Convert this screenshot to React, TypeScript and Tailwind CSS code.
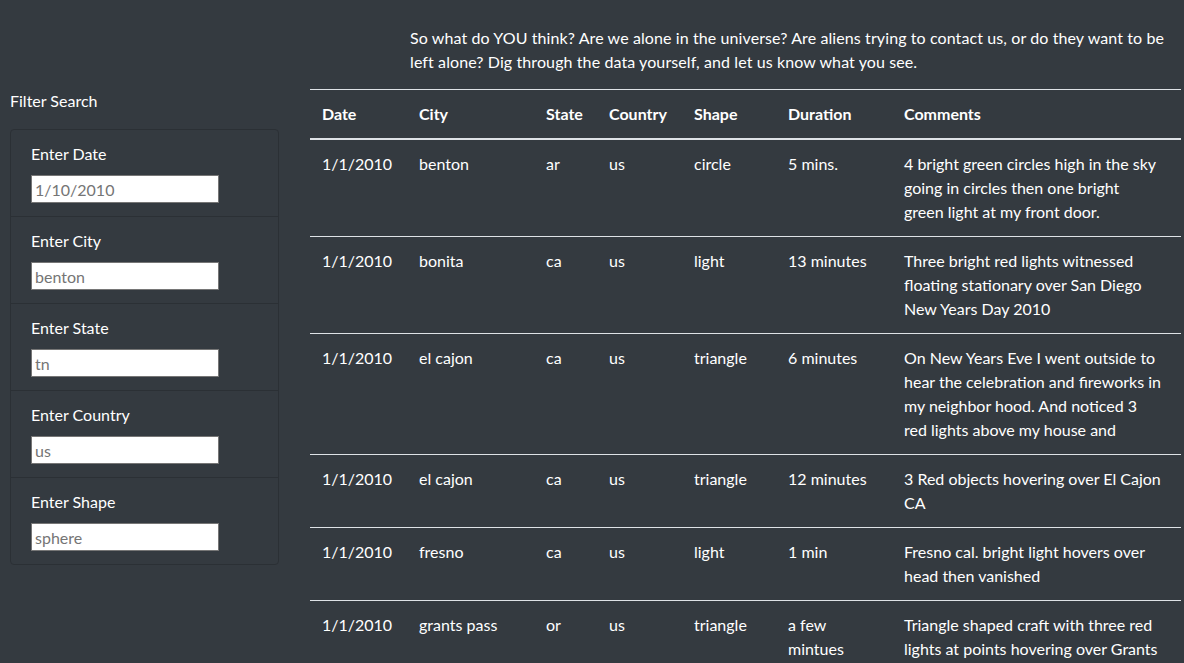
import React from "react";

const rows: [string, string, string, string, string, string, string[]][] = [
  ["1/1/2010", "benton", "ar", "us", "circle", "5 mins.", ["4 bright green circles high in the sky", "going in circles then one bright", "green light at my front door."]],
  ["1/1/2010", "bonita", "ca", "us", "light", "13 minutes", ["Three bright red lights witnessed", "floating stationary over San Diego", "New Years Day 2010"]],
  ["1/1/2010", "el cajon", "ca", "us", "triangle", "6 minutes", ["On New Years Eve I went outside to", "hear the celebration and fireworks in", "my neighbor hood. And noticed 3", "red lights above my house and"]],
  ["1/1/2010", "el cajon", "ca", "us", "triangle", "12 minutes", ["3 Red objects hovering over El Cajon", "CA"]],
  ["1/1/2010", "fresno", "ca", "us", "light", "1 min", ["Fresno cal. bright light hovers over", "head then vanished"]],
  ["1/1/2010", "grants pass", "or", "us", "triangle", "a few mintues", ["Triangle shaped craft with three red", "lights at points hovering over Grants", "Pass"]],
];

const filters = [
  ["Enter Date", "1/10/2010"],
  ["Enter City", "benton"],
  ["Enter State", "tn"],
  ["Enter Country", "us"],
  ["Enter Shape", "sphere"],
];

const headers = ["Date", "City", "State", "Country", "Shape", "Duration", "Comments"];
const widths = [97, 127, 63, 85, 94, 116, 289];

export default function App() {
  return (
    <div
      className="h-[663px] w-[1184px] overflow-hidden bg-[#343a40] text-white text-[16px] leading-6"
      style={{ fontFamily: 'Lato, "Open Sans", sans-serif' }}
    >
      <div className="pt-[26px] pl-[410px] mb-[15px]">
        <p className="w-[760px] tracking-[0.1px]">
          So what do YOU think? Are we alone in the universe? Are aliens trying to contact us, or do they want to be left alone? Dig through the data yourself, and let us know what you see.
        </p>
      </div>
      <div className="flex">
        <div className="ml-[10px] w-[269px] shrink-0">
          <div className="mb-4">Filter Search</div>
          <ul className="border border-[#2b3035] rounded-[4px]">
            {filters.map(([label, ph], i) => (
              <li
                key={label}
                className={`px-5 pt-3 pb-[13px] ${i < filters.length - 1 ? "border-b border-[#2b3035]" : ""}`}
              >
                <label className="block mb-[9px]">{label}</label>
                <input
                  placeholder={ph}
                  className="block w-[188px] h-[28px] bg-white border border-[#767676] px-[3px] text-[16px] text-black placeholder:text-[#757575] outline-none"
                />
              </li>
            ))}
          </ul>
        </div>
        <div className="ml-[31px] w-[871px] shrink-0">
          <table className="table-fixed w-[871px] border-collapse">
            <colgroup>
              {widths.map((w, i) => (
                <col key={i} style={{ width: w }} />
              ))}
            </colgroup>
            <thead>
              <tr>
                {headers.map((h) => (
                  <th
                    key={h}
                    className="text-left font-bold p-3 border-t border-t-[#dee2e6] border-b-2 border-b-[#dee2e6] align-bottom"
                  >
                    {h}
                  </th>
                ))}
              </tr>
            </thead>
            <tbody>
              {rows.map((r, i) => (
                <tr key={i}>
                  {r.slice(0, 6).map((c, j) => (
                    <td key={j} className={`p-3 align-top ${i > 0 ? "border-t border-[#dee2e6]" : ""}`}>
                      {c as string}
                    </td>
                  ))}
                  <td className={`p-3 align-top ${i > 0 ? "border-t border-[#dee2e6]" : ""}`}>
                    {(r[6] as string[]).map((line, k) => (
                      <span key={k} className="block whitespace-nowrap">
                        {line}
                      </span>
                    ))}
                  </td>
                </tr>
              ))}
            </tbody>
          </table>
        </div>
      </div>
    </div>
  );
}
